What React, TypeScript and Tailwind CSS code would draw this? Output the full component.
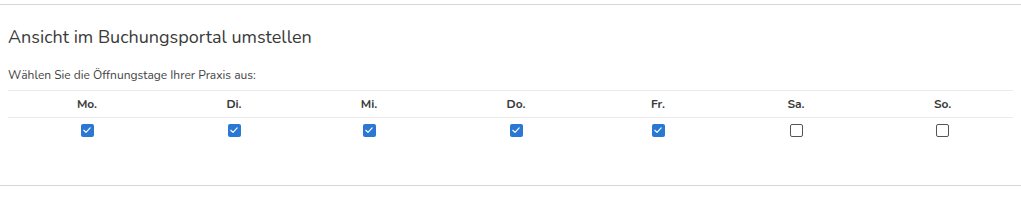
const days = [
  { label: "Mo.", open: true, width: "w-[158px]" },
  { label: "Di.", open: true, width: "w-[136px]" },
  { label: "Mi.", open: true, width: "w-[134px]" },
  { label: "Do.", open: true, width: "w-[160px]" },
  { label: "Fr.", open: true, width: "w-[124px]" },
  { label: "Sa.", open: false, width: "w-[152px]" },
  { label: "So.", open: false, width: "" },
];

const CheckBox = ({ checked }: { checked: boolean }) =>
  checked ? (
    <span className="inline-flex h-[13px] w-[13px] items-center justify-center rounded-[2px] bg-[#2a78d4] align-middle">
      <svg viewBox="0 0 12 12" className="h-[10px] w-[10px]" fill="none">
        <path d="M2.2 6.3 L4.8 8.8 L9.8 3.4" stroke="#fff" strokeWidth="1.4" strokeLinecap="round" strokeLinejoin="round" />
      </svg>
    </span>
  ) : (
    <span className="inline-block h-[13px] w-[13px] rounded-[2px] border border-[#555] bg-white align-middle" />
  );

export default function App() {
  return (
    <div className="w-[1021px] h-[200px] bg-white" style={{ fontFamily: "Nunito, Lato, 'Noto Sans', sans-serif" }}>
      <div className="pt-[4px]">
        <div className="border-t border-[#d6d6d6]" />
        <div className="px-2">
          <h2 className="pt-[20px] text-[18px] leading-[24px] text-[#3a3a3a]">Ansicht im Buchungsportal umstellen</h2>
          <p className="mt-[19px] text-[12px] leading-[14px] text-[#444]">Wählen Sie die Öffnungstage Ihrer Praxis aus:</p>
          <table className="mt-[8px] w-full table-fixed border-collapse">
            <thead>
              <tr className="border-t border-b border-[#ececec]">
                {days.map((d) => (
                  <th key={d.label} className={`${d.width} h-[27px] text-center text-[12px] font-bold text-[#3a3a3a]`}>
                    {d.label}
                  </th>
                ))}
              </tr>
            </thead>
            <tbody>
              <tr>
                {days.map((d) => (
                  <td key={d.label} className="h-[24px] pb-[1px] text-center leading-none">
                    <CheckBox checked={d.open} />
                  </td>
                ))}
              </tr>
            </tbody>
          </table>
        </div>
        <div className="mt-[43px] border-t border-[#d6d6d6]" />
      </div>
    </div>
  );
}
